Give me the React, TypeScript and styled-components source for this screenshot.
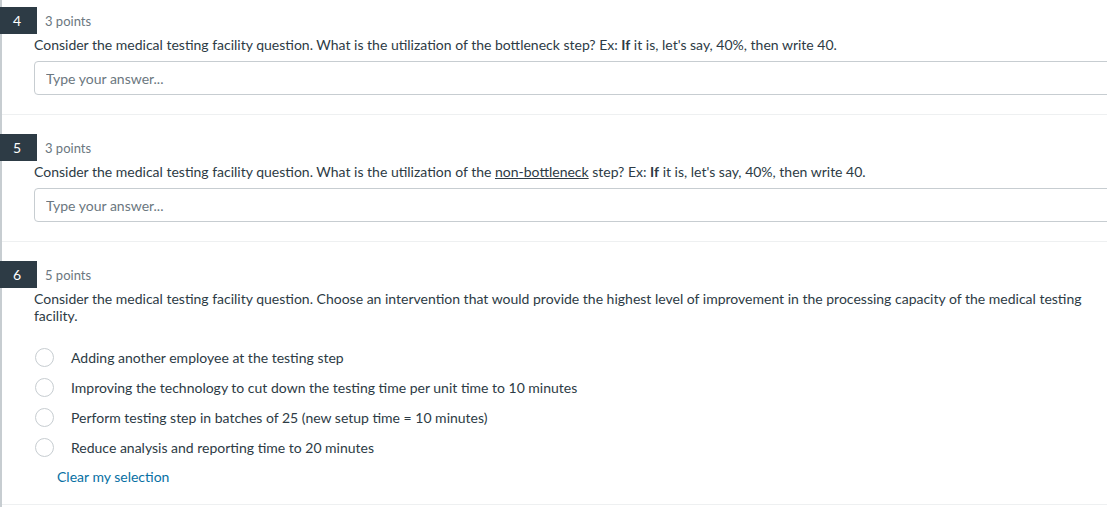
import styled, { createGlobalStyle } from "styled-components";

const GlobalStyle = createGlobalStyle`
  html, body {
    margin: 0;
    padding: 0;
    background: #ffffff;
    overflow: hidden;
  }
  body {
    font-family: Lato, "Liberation Sans", sans-serif;
    color: #2d3b45;
  }
`;

interface Choice {
  label: string;
}

const choices: Choice[] = [
  { label: "Adding another employee at the testing step" },
  { label: "Improving the technology to cut down the testing time per unit time to 10 minutes" },
  { label: "Perform testing step in batches of 25 (new setup time = 10 minutes)" },
  { label: "Reduce analysis and reporting time to 20 minutes" },
];

export default function App() {
  return (
    <>
      <GlobalStyle />
      <Page>
        <Question first>
          <Header>
            <Badge>4</Badge>
            <Points>3 points</Points>
          </Header>
          <Body>
            <Prompt>
              Consider the medical testing facility question. What is the utilization of the
              bottleneck step? Ex: <strong>If</strong> it is, let's say, 40%, then write 40.
            </Prompt>
            <AnswerInput placeholder="Type your answer..." />
          </Body>
        </Question>

        <Question>
          <Header>
            <Badge>5</Badge>
            <Points>3 points</Points>
          </Header>
          <Body>
            <Prompt>
              Consider the medical testing facility question. What is the utilization of the{" "}
              <Underlined>non-bottleneck</Underlined> step? Ex: <strong>If</strong> it is, let's
              say, 40%, then write 40.
            </Prompt>
            <AnswerInput placeholder="Type your answer..." />
          </Body>
        </Question>

        <Question>
          <Header>
            <Badge>6</Badge>
            <Points>5 points</Points>
          </Header>
          <Body>
            <Prompt>
              Consider the medical testing facility question. Choose an intervention that would
              provide the highest level of improvement in the processing capacity of the medical
              testing facility.
            </Prompt>
            <ChoiceList>
              {choices.map((c) => (
                <ChoiceRow key={c.label}>
                  <Radio />
                  <ChoiceLabel>{c.label}</ChoiceLabel>
                </ChoiceRow>
              ))}
            </ChoiceList>
            <ClearLink>Clear my selection</ClearLink>
          </Body>
        </Question>
      </Page>
    </>
  );
}

const Page = styled.div`
  width: 1135px;
  min-height: 507px;
  border-left: 2px solid #c7cdd1;
  box-sizing: border-box;
`;

const Question = styled.section<{ first?: boolean }>`
  padding-top: ${(p) => (p.first ? "7px" : "19px")};
  padding-bottom: 19px;
  border-bottom: 1px solid #eef0f1;
`;

const Header = styled.div`
  display: flex;
  align-items: center;
  height: 27px;
  margin-left: -2px;
`;

const Badge = styled.div`
  width: 37px;
  height: 27px;
  background: #2d3b45;
  color: #ffffff;
  font-size: 14px;
  display: flex;
  align-items: center;
  justify-content: center;
  padding-right: 3px;
  box-sizing: border-box;
`;

const Points = styled.span`
  margin-left: 8px;
  font-size: 13px;
  color: #6b7780;
`;

const Body = styled.div`
  padding-left: 32px;
  padding-top: 2px;
`;

const Prompt = styled.p`
  margin: 0;
  font-size: 14px;
  line-height: 17px;
  max-width: 1070px;

  strong {
    font-weight: 700;
  }
`;

const Underlined = styled.span`
  text-decoration: underline;
`;

const AnswerInput = styled.input`
  display: block;
  margin-top: 8px;
  width: 100%;
  height: 34px;
  box-sizing: border-box;
  border: 1px solid #c7cdd1;
  border-radius: 4px;
  padding: 0 11px;
  font-family: Lato, "Liberation Sans", sans-serif;
  font-size: 14px;
  color: #2d3b45;
  outline: none;

  &::placeholder {
    color: #6b7780;
  }
`;

const ChoiceList = styled.div`
  margin-top: 18px;
  display: flex;
  flex-direction: column;
`;

const ChoiceRow = styled.label`
  display: flex;
  align-items: center;
  height: 30px;
`;

const Radio = styled.span`
  width: 17px;
  height: 17px;
  border: 1px solid #c7cdd1;
  border-radius: 50%;
  margin-left: 1px;
  flex-shrink: 0;
`;

const ChoiceLabel = styled.span`
  margin-left: 17px;
  font-size: 14px;
`;

const ClearLink = styled.a`
  display: inline-block;
  margin-top: 6px;
  margin-left: 23px;
  font-size: 14px;
  line-height: 17px;
  color: #0770a3;
  cursor: pointer;
`;
